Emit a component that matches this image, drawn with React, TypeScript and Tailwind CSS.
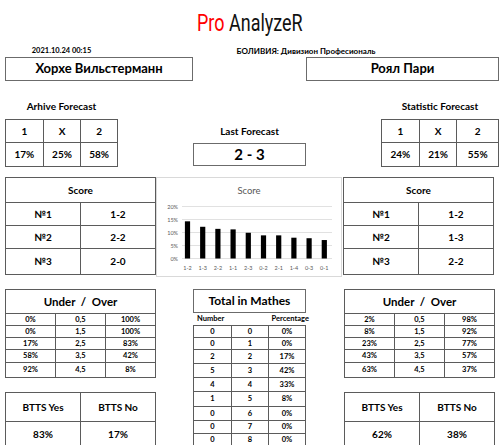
const B = "border border-[#5b5b5b]";

const ScoreTable = ({ rows }: { rows: [string, string][] }) => (
  <table className="w-[151px] table-fixed border-collapse text-[10px] font-bold">
    <tbody>
      <tr className="h-[25px]">
        <td colSpan={2} className={B + " text-center"}>Score</td>
      </tr>
      {rows.map(([a, b], i) => (
        <tr key={a} className={i === 2 ? "h-[26px]" : "h-[23px]"}>
          <td className={B + " w-[75px] text-center"}>{a}</td>
          <td className={B + " text-center"}>{b}</td>
        </tr>
      ))}
    </tbody>
  </table>
);

const ForecastTable = ({ cols, values }: { cols: string[]; values: string[] }) => (
  <table className="table-fixed border-collapse text-[10px] font-bold">
    <tbody>
      <tr className="h-[23px]">
        {["1", "X", "2"].map((h, i) => (
          <td key={h} className={B + " text-center " + cols[i]}>{h}</td>
        ))}
      </tr>
      <tr className="h-[24px]">
        {values.map((v) => (
          <td key={v} className={B + " text-center"}>{v}</td>
        ))}
      </tr>
    </tbody>
  </table>
);

const UnderOver = ({ rows, right }: { rows: [string, string, string][]; right?: boolean }) => {
  const hs = ["h-[12px]", "h-[12px]", "h-[12px]", "h-[13px]", "h-[15px]"];
  return (
    <table className="w-[151px] table-fixed border-collapse font-bold">
      <tbody>
        <tr className="h-[24px]">
          <td colSpan={3} className={B + " text-center text-[11.5px]"}>
            Under&nbsp;&nbsp;/&nbsp;&nbsp;Over
          </td>
        </tr>
        {rows.map(([u, line, o], i) => (
          <tr key={line} className={hs[i] + " text-[7.5px] leading-none"}>
            <td className={B + " text-center " + (right ? "w-[38px]" : "w-[39px]")}>{u}</td>
            <td className={B + " text-center w-[75px]"}>{line}</td>
            <td className={B + " text-center"}>{o}</td>
          </tr>
        ))}
      </tbody>
    </table>
  );
};

const Btts = ({ yes, no }: { yes: string; no: string }) => (
  <table className="w-[151px] table-fixed border-collapse text-[10px] font-bold">
    <tbody>
      <tr className="h-[29px]">
        <td className={B + " w-[75px] text-center"}>BTTS Yes</td>
        <td className={B + " text-center"}>BTTS No</td>
      </tr>
      <tr className="h-[26px]">
        <td className={B + " text-center"}>{yes}</td>
        <td className={B + " text-center"}>{no}</td>
      </tr>
    </tbody>
  </table>
);

const bars = [
  ["1-2", 14.3],
  ["1-3", 12.2],
  ["2-2", 11.4],
  ["1-1", 11.2],
  ["2-3", 9.9],
  ["0-2", 8.9],
  ["2-1", 8.9],
  ["1-4", 8.0],
  ["0-3", 7.8],
  ["0-1", 7.1],
] as const;

const ScoreChart = () => (
  <div className="w-[186px] h-[100px] border border-[#d9d9d9] bg-white">
    <svg width="184" height="98" viewBox="0 0 184 98" className="block">
      <text x="92" y="16" textAnchor="middle" fontSize="9.5" fill="#595959" fontFamily="Lato, sans-serif">
        Score
      </text>
      {[0, 5, 10, 15, 20].map((p) => {
        const y = 80.5 - p * 2.6;
        return (
          <g key={p}>
            <line x1="25" x2="175" y1={y} y2={y} stroke="#d9d9d9" strokeWidth="0.8" />
            <text x="21" y={y + 2} textAnchor="end" fontSize="5.5" fill="#595959" fontFamily="Lato, sans-serif">
              {p}%
            </text>
          </g>
        );
      })}
      {bars.map(([label, v], i) => {
        const cx = 30.5 + i * 15.2;
        const h = v * 2.6;
        return (
          <g key={label}>
            <rect x={cx - 2.6} y={80.5 - h} width="5.2" height={h} fill="#000" />
            <text x={cx} y="92" textAnchor="middle" fontSize="5.5" fill="#595959" fontFamily="Lato, sans-serif">
              {label}
            </text>
          </g>
        );
      })}
    </svg>
  </div>
);

const mathes = [
  ["0", "0", "0%", "h-[12px]"],
  ["0", "1", "0%", "h-[12px]"],
  ["2", "2", "17%", "h-[14px]"],
  ["5", "3", "42%", "h-[14px]"],
  ["4", "4", "33%", "h-[14px]"],
  ["1", "5", "8%", "h-[15px]"],
  ["0", "6", "0%", "h-[14px]"],
  ["0", "7", "0%", "h-[13px]"],
  ["0", "8", "0%", "h-[13px]"],
];

export default function App() {
  return (
    <div className="w-[500px] h-[445px] overflow-hidden bg-white text-black font-['Lato','Open_Sans',sans-serif]">
      <div className="h-[45px] flex items-center justify-center pt-[1px] text-[23px] font-['Roboto',sans-serif] leading-none">
        <div className="scale-x-[0.78] whitespace-nowrap">
          <span className="text-[#ff0000]">Pro</span>
          <span className="ml-[6px] text-[#111]">AnalyzeR</span>
        </div>
      </div>

      <div className="flex h-[12px] items-center text-[7.5px] font-bold leading-none">
        <div className="ml-[5px] w-[113px] text-center">2021.10.24 00:15</div>
        <div className="ml-[75px] w-[226px] text-center text-[8px]">БОЛИВИЯ: Дивизион Професиональ</div>
      </div>

      <div className="flex h-[24px] text-[13px] font-bold">
        <div className="ml-[5px] w-[188px] border border-[#6b6b6b] flex items-center justify-center">
          Хорхе Вильстерманн
        </div>
        <div className="ml-[113px] w-[193px] border border-[#6b6b6b] flex items-center justify-center">
          Роял Пари
        </div>
      </div>

      <div className="flex h-[85px] font-bold">
        <div className="ml-[5px] w-[113px]">
          <div className="pt-[20px] h-[38px] text-[10px] leading-[10px] text-center">Arhive Forecast</div>
          <ForecastTable cols={["w-[38px]", "w-[38px]", "w-[37px]"]} values={["17%", "25%", "58%"]} />
        </div>
        <div className="ml-[75px] w-[113px]">
          <div className="pt-[45px] h-[62px] text-[10px] leading-[10px] text-center">Last Forecast</div>
          <div className="h-[23px] border border-[#6b6b6b] flex items-center justify-center text-[15px]">
            2 - 3
          </div>
        </div>
        <div className="ml-[75px] w-[118px]">
          <div className="pt-[20px] h-[38px] text-[10px] leading-[10px] text-center">Statistic Forecast</div>
          <ForecastTable cols={["w-[38px]", "w-[38px]", "w-[42px]"]} values={["24%", "21%", "55%"]} />
        </div>
      </div>

      <div className="flex mt-[11px]">
        <div className="ml-[5px]">
          <ScoreTable rows={[["№1", "1-2"], ["№2", "2-2"], ["№3", "2-0"]]} />
        </div>
        <ScoreChart />
        <div className="ml-[1px]">
          <ScoreTable rows={[["№1", "1-2"], ["№2", "1-3"], ["№3", "2-2"]]} />
        </div>
      </div>

      <div className="flex mt-[12px] items-start">
        <div className="ml-[5px] w-[151px] flex flex-col gap-[14px]">
          <UnderOver
            rows={[
              ["0%", "0,5", "100%"],
              ["0%", "1,5", "100%"],
              ["17%", "2,5", "83%"],
              ["58%", "3,5", "42%"],
              ["92%", "4,5", "8%"],
            ]}
          />
          <Btts yes="83%" no="17%" />
        </div>

        <div className="ml-[37px] w-[113px] font-bold">
          <div className="h-[24px] border border-[#6b6b6b] flex items-center justify-center text-[12px]">
            Total in Mathes
          </div>
          <div className="h-[12px] flex items-center justify-between text-[7.5px] leading-none pl-[4px] -mr-[3px]">
            <span>Number</span>
            <span>Percentage</span>
          </div>
          <table className="w-[113px] table-fixed border-collapse text-[7.5px] leading-none">
            <tbody>
              {mathes.map(([n, g, p, h]) => (
                <tr key={g} className={h}>
                  <td className={B + " w-[38px] text-center"}>{n}</td>
                  <td className={B + " w-[37px] text-center"}>{g}</td>
                  <td className={B + " text-center"}>{p}</td>
                </tr>
              ))}
            </tbody>
          </table>
        </div>

        <div className="ml-[38px] w-[151px] flex flex-col gap-[14px]">
          <UnderOver
            right
            rows={[
              ["2%", "0,5", "98%"],
              ["8%", "1,5", "92%"],
              ["23%", "2,5", "77%"],
              ["43%", "3,5", "57%"],
              ["63%", "4,5", "37%"],
            ]}
          />
          <Btts yes="62%" no="38%" />
        </div>
      </div>
    </div>
  );
}
